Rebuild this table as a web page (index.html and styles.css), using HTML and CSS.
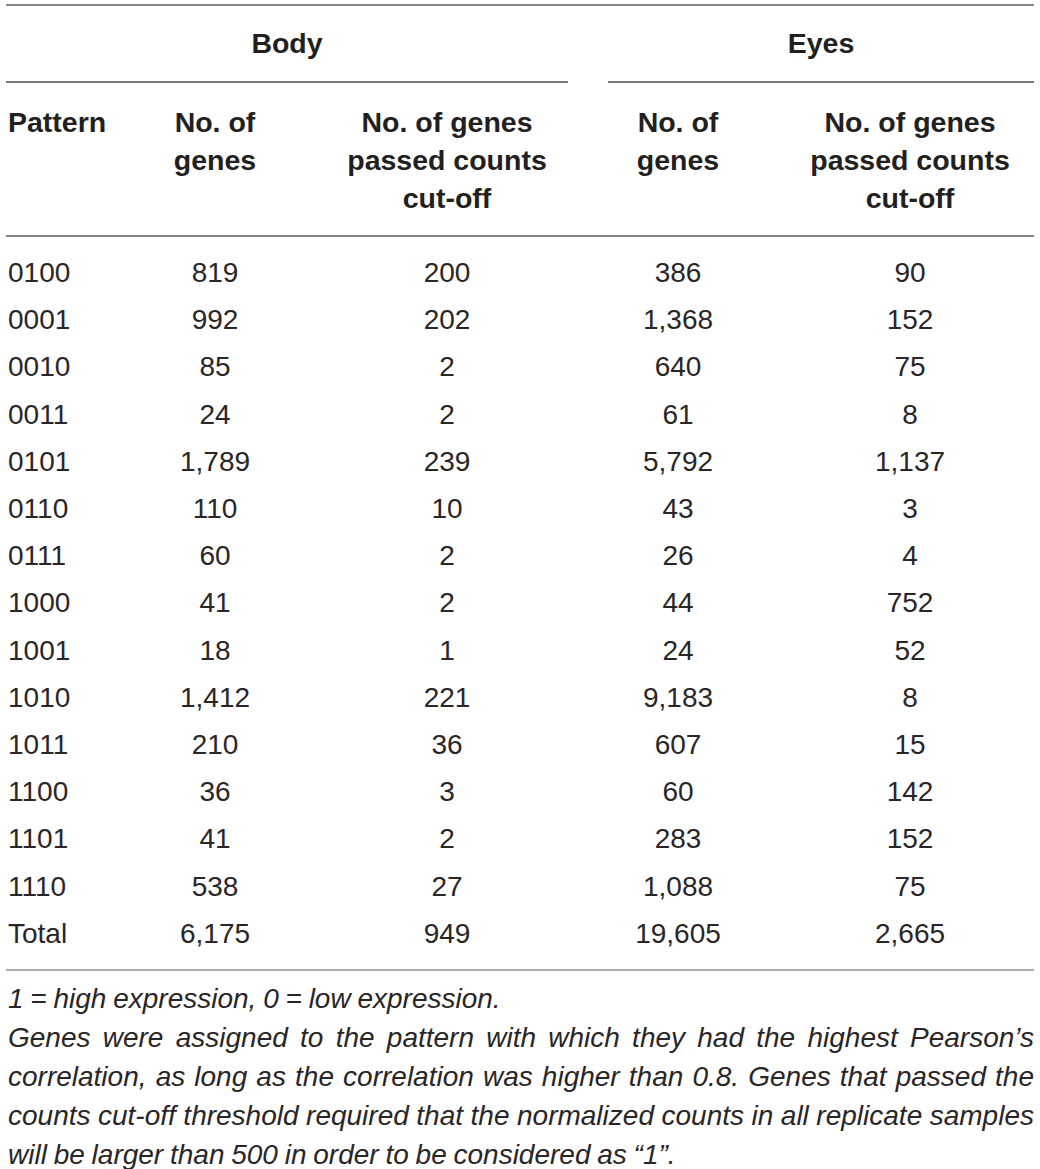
FILE: index.html
```html
<!DOCTYPE html>
<html lang="en">
<head>
  <meta charset="UTF-8" />
  <title>Expression patterns</title>
  <meta name="viewport" content="width=device-width, initial-scale=1.0" />
  <link rel="stylesheet" href="styles.css">
</head>
<body>
  <div class="page">
    <table class="data-table">
      <colgroup>
        <col class="col-pattern">
        <col class="col-genes">
        <col class="col-passed">
        <col class="col-gap">
        <col class="col-genes2">
        <col class="col-passed2">
      </colgroup>
      <thead>
        <tr class="group-row">
          <th colspan="3" class="group">Body</th>
          <th class="gap"></th>
          <th colspan="2" class="group group-eyes">Eyes</th>
        </tr>
        <tr class="head-row">
          <th class="left">Pattern</th>
          <th>No. of<br>genes</th>
          <th class="passed">No. of genes<br>passed counts<br>cut-off</th>
          <th class="gap"></th>
          <th>No. of<br>genes</th>
          <th class="passed2">No. of genes<br>passed counts<br>cut-off</th>
        </tr>
      </thead>
      <tbody>
        <tr><td class="left">0100</td><td>819</td><td class="passed">200</td><td class="gap"></td><td>386</td><td class="passed2">90</td></tr>
        <tr><td class="left">0001</td><td>992</td><td class="passed">202</td><td class="gap"></td><td>1,368</td><td class="passed2">152</td></tr>
        <tr><td class="left">0010</td><td>85</td><td class="passed">2</td><td class="gap"></td><td>640</td><td class="passed2">75</td></tr>
        <tr><td class="left">0011</td><td>24</td><td class="passed">2</td><td class="gap"></td><td>61</td><td class="passed2">8</td></tr>
        <tr><td class="left">0101</td><td>1,789</td><td class="passed">239</td><td class="gap"></td><td>5,792</td><td class="passed2">1,137</td></tr>
        <tr><td class="left">0110</td><td>110</td><td class="passed">10</td><td class="gap"></td><td>43</td><td class="passed2">3</td></tr>
        <tr><td class="left">0111</td><td>60</td><td class="passed">2</td><td class="gap"></td><td>26</td><td class="passed2">4</td></tr>
        <tr><td class="left">1000</td><td>41</td><td class="passed">2</td><td class="gap"></td><td>44</td><td class="passed2">752</td></tr>
        <tr><td class="left">1001</td><td>18</td><td class="passed">1</td><td class="gap"></td><td>24</td><td class="passed2">52</td></tr>
        <tr><td class="left">1010</td><td>1,412</td><td class="passed">221</td><td class="gap"></td><td>9,183</td><td class="passed2">8</td></tr>
        <tr><td class="left">1011</td><td>210</td><td class="passed">36</td><td class="gap"></td><td>607</td><td class="passed2">15</td></tr>
        <tr><td class="left">1100</td><td>36</td><td class="passed">3</td><td class="gap"></td><td>60</td><td class="passed2">142</td></tr>
        <tr><td class="left">1101</td><td>41</td><td class="passed">2</td><td class="gap"></td><td>283</td><td class="passed2">152</td></tr>
        <tr><td class="left">1110</td><td>538</td><td class="passed">27</td><td class="gap"></td><td>1,088</td><td class="passed2">75</td></tr>
        <tr class="total-row"><td class="left">Total</td><td>6,175</td><td class="passed">949</td><td class="gap"></td><td>19,605</td><td class="passed2">2,665</td></tr>
      </tbody>
    </table>

    <div class="notes">
      <p>1 = high expression, 0 = low expression.</p>
      <p>Genes were assigned to the pattern with which they had the highest Pearson’s correlation, as long as the correlation was higher than 0.8. Genes that passed the counts cut-off threshold required that the normalized counts in all replicate samples will be larger than 500 in order to be considered as “1”.</p>
    </div>
  </div>
</body>
</html>
```

FILE: styles.css
```css
html, body {
  margin: 0;
  padding: 0;
  background: #fff;
  color: #231f20;
  font-family: 'Liberation Sans', Arial, Helvetica, sans-serif;
}

.page {
  padding: 4px 6px 0 6px;
}

.data-table {
  width: 1028px;
  table-layout: fixed;
  border-collapse: separate;
  border-spacing: 0;
}

.col-pattern { width: 124px; }
.col-genes { width: 170px; }
.col-passed { width: 268px; }
.col-gap { width: 40px; }
.col-genes2 { width: 140px; }
.col-passed2 { width: 286px; }

th, td {
  padding: 0;
  text-align: center;
}

.left {
  text-align: left;
  padding-left: 2px;
}

.passed {
  padding-left: 26px;
}

.passed2 {
  padding-left: 38px;
}

/* header */
th {
  font-weight: bold;
  font-size: 28.5px;
  line-height: 38px;
  vertical-align: top;
}

.group-row th {
  border-top: 2px solid #858585;
  padding: 18px 0 19px 0;
}

.group-row th.group {
  border-bottom: 2px solid #7a7a7a;
}

.head-row th {
  padding: 20px 0 18px 0;
  border-bottom: 2px solid #858585;
}

.head-row th.left {
  padding-left: 2px;
}

.head-row th.passed {
  padding-left: 26px;
}

.head-row th.passed2 {
  padding-left: 38px;
}

/* body rows */
td {
  font-size: 28px;
  line-height: 47.2px;
  color: #2a2627;
}

tbody tr:first-child td {
  padding-top: 12px;
}

tbody tr.total-row td {
  padding-bottom: 12px;
  border-bottom: 2px solid #ababab;
}

/* footnotes */
.notes {
  padding: 8px 0 0 2px;
}

.notes p {
  margin: 0;
  font-style: italic;
  font-size: 28px;
  word-spacing: -1px;
  line-height: 39px;
  text-align: justify;
  color: #2a2627;
}
```
